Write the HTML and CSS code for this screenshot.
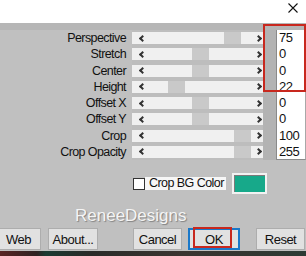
FILE: index.html
```html
<!DOCTYPE html>
<html>
<head>
<meta charset="utf-8">
<link rel="stylesheet" href="styles.css">
</head>
<body>
<div class="window">
  <div class="titlebar">
    <svg class="close" width="10" height="10" viewBox="0 0 10 10"><path d="M0.5 0.5L9.5 9.5M9.5 0.5L0.5 9.5" stroke="#111" stroke-width="1.1" fill="none"/></svg>
  </div>
  <div class="band"></div>
  <div class="sliders">
    <div class="label">Perspective</div><div class="cell"><div class="bar"><i class="lt"></i><b class="thumb" style="left:92px"></b><i class="gt"></i></div></div><div class="strip"></div><div class="value">75</div>
    <div class="label">Stretch</div><div class="cell"><div class="bar"><i class="lt"></i><b class="thumb" style="left:60px"></b><i class="gt"></i></div></div><div class="strip"></div><div class="value">0</div>
    <div class="label">Center</div><div class="cell"><div class="bar"><i class="lt"></i><b class="thumb" style="left:60px"></b><i class="gt"></i></div></div><div class="strip"></div><div class="value">0</div>
    <div class="label">Height</div><div class="cell"><div class="bar"><i class="lt"></i><b class="thumb" style="left:36px"></b><i class="gt"></i></div></div><div class="strip"></div><div class="value">22</div>
    <div class="label">Offset X</div><div class="cell"><div class="bar"><i class="lt"></i><b class="thumb" style="left:60px"></b><i class="gt"></i></div></div><div class="strip"></div><div class="value">0</div>
    <div class="label">Offset Y</div><div class="cell"><div class="bar"><i class="lt"></i><b class="thumb" style="left:60px"></b><i class="gt"></i></div></div><div class="strip"></div><div class="value">0</div>
    <div class="label">Crop</div><div class="cell"><div class="bar"><i class="lt"></i><b class="thumb" style="left:102px"></b><i class="gt"></i></div></div><div class="strip"></div><div class="value">100</div>
    <div class="label">Crop Opacity</div><div class="cell"><div class="bar"><i class="lt"></i><b class="thumb" style="left:102px"></b><i class="gt"></i></div></div><div class="strip"></div><div class="value last">255</div>
  </div>
  <div class="options">
    <span class="checkbox"></span>
    <span class="check-label">Crop BG Color</span>
    <span class="swatch"></span>
  </div>
  <div class="watermark">ReneeDesigns</div>
  <div class="buttons">
    <button class="btn web">Web</button>
    <button class="btn about">About...</button>
    <button class="btn cancel">Cancel</button>
    <button class="btn ok">OK<span class="mark mark-ok"></span></button>
    <button class="btn reset">Reset</button>
  </div>
  <div class="spacer"></div>
  <div class="bottom-strip"></div>
  <div class="mark mark-values"></div>
</div>
</body>
</html>
```
FILE: styles.css
```css
* { box-sizing: border-box; }
body {
  margin: 0;
  width: 306px;
  height: 256px;
  overflow: hidden;
  font-family: "Liberation Sans", Arial, sans-serif;
  color: #000;
}
.window {
  position: relative;
  display: flex;
  flex-direction: column;
  width: 306px;
  height: 256px;
  background: #c0c0c0;
}
.titlebar {
  height: 23px;
  background: #fff;
  display: flex;
  justify-content: flex-end;
  align-items: flex-start;
}
.close { margin: 3px 8px 0 0; }
.band { height: 7px; background: #b6b6b6; }
.sliders {
  display: grid;
  grid-template-columns: 132px 131px 13px 30px;
  grid-auto-rows: 16.25px;
}
.label {
  font-size: 12.5px;
  letter-spacing: -0.6px;
  line-height: 16px;
  text-align: right;
  padding-right: 6px;
  white-space: nowrap;
  color: #111;
}
.cell { padding-top: 2px; background: #bdbdbd; }
.bar {
  position: relative;
  height: 12px;
  background: #f0f0f0;
  display: flex;
  align-items: center;
  justify-content: space-between;
  padding: 0 2px 0 8px;
}
.lt, .gt {
  position: relative;
  z-index: 1;
  width: 5px;
  height: 5px;
  border-left: 2px solid #333;
  border-bottom: 2px solid #333;
}
.lt { transform: rotate(45deg); }
.gt { transform: rotate(-135deg); }
.thumb {
  position: absolute;
  top: 0;
  width: 17px;
  height: 12px;
  background: #c9c9c9;
}
.strip { background: #b3b3b3; }
.value {
  background: #fff;
  border-left: 1px solid #8a8a8a;
  border-right: 1px solid #a8a8a8;
  font-size: 13px;
  letter-spacing: -0.5px;
  line-height: 16px;
  padding-left: 2px;
  color: #111;
}
.value.last { border-bottom: 1px solid #8a8a8a; }
.options {
  margin-top: 13px;
  height: 21px;
  display: flex;
  align-items: center;
  padding-left: 133px;
}
.checkbox {
  width: 12px;
  height: 12px;
  background: #fff;
  border: 1px solid #333;
}
.check-label {
  width: 81px;
  height: 13px;
  background: #f6f6f6;
  font-size: 12.5px;
  letter-spacing: -0.55px;
  line-height: 13px;
  padding-left: 4px;
  white-space: nowrap;
  color: #111;
}
.swatch {
  margin-left: 6px;
  width: 35px;
  height: 21px;
  background: #17a98a;
  border: 2px solid #f2f2f2;
  box-shadow: inset 1px 1px 0 #7a7a7a;
}
.watermark {
  margin-top: 8px;
  height: 26px;
  padding-left: 75px;
  font-size: 17px;
  line-height: 28px;
  color: #f4f4f4;
  text-shadow: 1px 1px 1px #808080;
}
.buttons {
  height: 22px;
  display: flex;
}
.btn {
  position: relative;
  height: 22px;
  padding: 0;
  background: #e1e1e1;
  border: 1px solid #adadad;
  font-family: inherit;
  font-size: 13px;
  letter-spacing: -0.5px;
  color: #111;
}
.web { margin-left: -4px; width: 45px; }
.about { margin-left: 7px; width: 50px; }
.cancel { margin-left: 35px; width: 49px; }
.ok { margin-left: 6px; width: 52px; border: 2px solid #1a78c9; }
.reset { margin-left: 16px; width: 49px; }
.spacer { height: 1px; }
.bottom-strip {
  height: 5px;
  background: linear-gradient(90deg, #5a2424 0%, #2e2222 12%, #1c3a32 15%, #2a2a28 30%, #3a3430 60%, #2c3a34 100%);
}
.mark {
  position: absolute;
  border: 2px solid #c8281e;
}
.mark-values { left: 263px; top: 24px; width: 43px; height: 68px; }
.mark-ok { left: 3px; top: -3px; width: 39px; height: 21px; }
```
